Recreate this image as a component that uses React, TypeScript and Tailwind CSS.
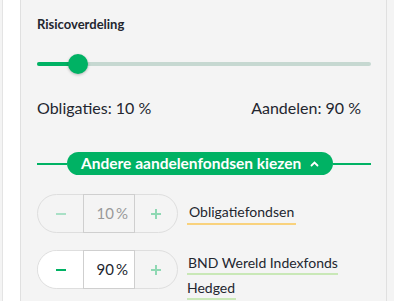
const font = { fontFamily: "Lato, 'Open Sans', sans-serif" };

function Stepper({ value, disabled }: { value: number; disabled?: boolean }) {
  return (
    <div className="flex h-[39px] w-[141px] shrink-0 rounded-full border border-[#dedede]">
      <button
        className={`flex w-[45px] items-center justify-center rounded-l-full ${
          disabled ? "" : "bg-white"
        }`}
      >
        <span
          className={`block h-[2px] w-[10px] ${
            disabled ? "bg-[#a9e0c6]" : "bg-[#00b264]"
          }`}
        />
      </button>
      <div
        className={`-my-px flex w-[52px] items-center justify-end border border-[#cfcfcf] pr-[6px] text-[15px] ${
          disabled ? "text-[#9a9a9a]" : "bg-white text-[#23262f]"
        }`}
      >
        {value}
        <span className="ml-[2px]">%</span>
      </div>
      <button className="relative flex flex-1 items-center justify-center">
        <span className="absolute h-[2px] w-[10px] bg-[#8fd8b3]" />
        <span className="absolute h-[10px] w-[2px] bg-[#8fd8b3]" />
      </button>
    </div>
  );
}

export default function App() {
  return (
    <div className="flex h-[301px] w-[394px] overflow-hidden bg-white" style={font}>
      <div className="w-[3px] border-r border-[#e4e4e4] bg-[#f4f4f4]" />
      <div className="w-[17px]" />
      <div className="w-[367px] border-x border-[#e0e0e0] bg-[#f4f4f4] pl-[16px] pr-[15px] text-[#23262f]">
        <h3 className="mt-[16px] text-[13px] font-bold leading-[16px]">Risicoverdeling</h3>

        {/* slider */}
        <div className="relative mt-[22px] h-[20px]">
          <div className="absolute top-[8px] h-[4px] w-full rounded-full bg-[#c6d8d1]" />
          <div className="absolute top-[8px] h-[4px] w-[42px] rounded-full bg-[#00b264]" />
          <div className="absolute left-[31px] top-0 h-[20px] w-[20px] rounded-full bg-[#00b264] shadow-[0_1px_3px_rgba(0,0,0,0.25)]" />
        </div>

        <div className="mt-[24px] flex justify-between pr-[10px] text-[16px] leading-[20px]">
          <span>Obligaties: 10 %</span>
          <span>Aandelen: 90 %</span>
        </div>

        {/* divider with toggle */}
        <div className="mt-[34px] flex items-center">
          <div className="h-[2px] w-[30px] bg-[#00b264]" />
          <button className="flex h-[23px] items-center gap-[9px] rounded-full bg-[#00b264] px-[14px] text-[15.5px] font-bold text-white">
            Andere aandelenfondsen kiezen
            <svg width="9" height="6" viewBox="0 0 9 6" fill="none">
              <path d="M1.5 4.5 4.5 1.5 7.5 4.5" stroke="white" strokeWidth="1.8" strokeLinecap="round" />
            </svg>
          </button>
          <div className="h-[2px] flex-1 bg-[#00b264]" />
        </div>

        <div className="mt-[19px] flex items-center gap-[9px]">
          <Stepper value={10} disabled />
          <span className="border-b-[2px] border-[#f9d27d] px-[2px] pb-[2px] text-[14px] leading-[18px]">
            Obligatiefondsen
          </span>
        </div>

        <div className="mt-[17px] flex items-start gap-[9px]">
          <Stepper value={90} />
          <p className="text-[14px] leading-[25px]">
            <span className="border-b-[2px] border-[#c9e8b7] px-[1px] pb-[2px]">
              BND Wereld Indexfonds Hedged
            </span>
          </p>
        </div>
      </div>
      <div className="flex-1 bg-[#f4f4f4]" />
    </div>
  );
}
